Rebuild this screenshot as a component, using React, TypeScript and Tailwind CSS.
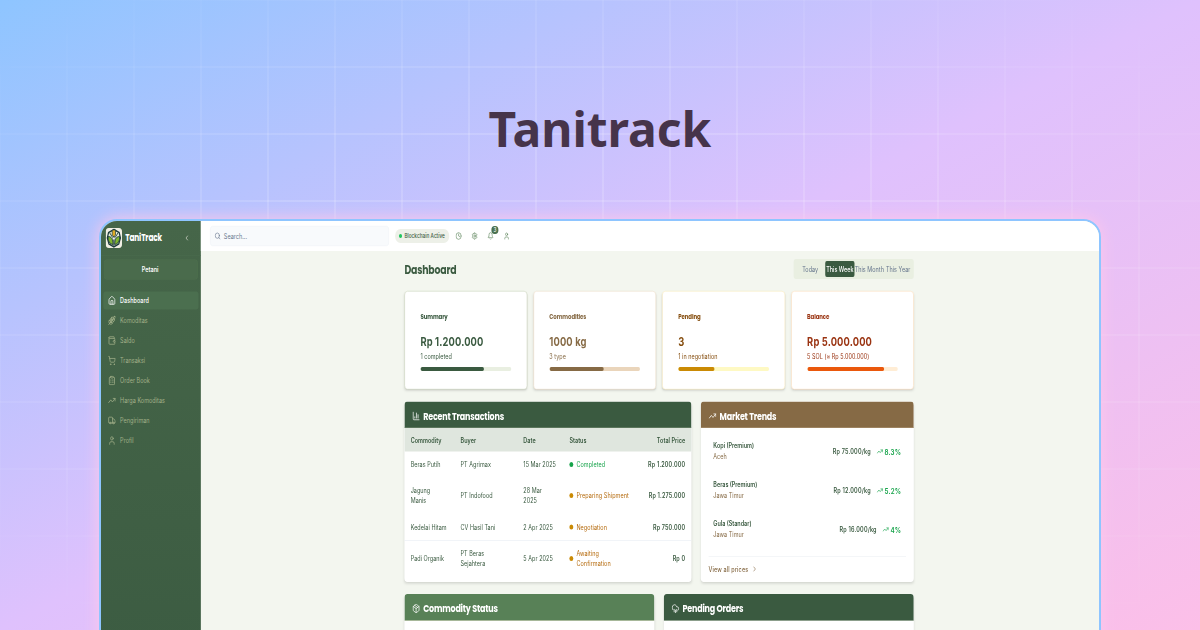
import React from "react";
import {
  House, Wallet, ShoppingCart, ClipboardList, TrendingUp, Truck, User, ChevronLeft, ChevronRight,
  Search, Settings, Bell, ChartColumn, Package, Clock, CloudRain, Wheat,
} from "lucide-react";

const nav = [
  { label: "Dashboard", icon: House, active: true },
  { label: "Komoditas", icon: Wheat },
  { label: "Saldo", icon: Wallet },
  { label: "Transaksi", icon: ShoppingCart },
  { label: "Order Book", icon: ClipboardList },
  { label: "Harga Komoditas", icon: TrendingUp },
  { label: "Pengiriman", icon: Truck },
  { label: "Profil", icon: User },
];

const stats = [
  { title: "Summary", value: "Rp 1.200.000", note: "1 completed", text: "text-[#3a5a40]", border: "border-[#bcc8aa]", track: "bg-[#e9efe1]", bar: "bg-[#3a5a40]", w: 70 },
  { title: "Commodities", value: "1000 kg", note: "3 type", text: "text-[#866a45]", border: "border-[#ead5bb]", track: "bg-[#ead5bb]", bar: "bg-[#866a45]", w: 60 },
  { title: "Pending", value: "3", note: "1 in negotiation", text: "text-[#854d0e]", border: "border-[#fbe7ab]", track: "bg-[#fef9c3]", bar: "bg-[#ca8a04]", w: 40 },
  { title: "Balance", value: "Rp 5.000.000", note: "5 SOL (≈ Rp 5.000.000)", text: "text-[#9a3412]", border: "border-[#fed7aa]", track: "bg-[#ffedd5]", bar: "bg-[#ea580c]", w: 85 },
];

const rows = [
  { c: "Beras Putih", b: "PT Agrimax", d: "15 Mar 2025", s: "Completed", p: "Rp 1.200.000", done: true, h: "h-[52px]" },
  { c: "Jagung Manis", b: "PT Indofood", d: "28 Mar 2025", s: "Preparing Shipment", p: "Rp 1.275.000", h: "h-[72px]" },
  { c: "Kedelai Hitam", b: "CV Hasil Tani", d: "2 Apr 2025", s: "Negotiation", p: "Rp 750.000", h: "h-[53px]" },
  { c: "Padi Organik", b: "PT Beras Sejahtera", d: "5 Apr 2025", s: "Awaiting Confirmation", p: "Rp 0", h: "h-[72px] border-t border-[#e2e8f0]" },
];

const trends = [
  { n: "Kopi (Premium)", r: "Aceh", p: "Rp 75.000/kg", v: "8.3%" },
  { n: "Beras (Premium)", r: "Jawa Timur", p: "Rp 12.000/kg", v: "5.2%" },
  { n: "Gula (Standar)", r: "Jawa Timur", p: "Rp 16.000/kg", v: "4%" },
];

const cols = "grid grid-cols-[128px_161px_118px_1fr_136px] items-center";
const head = "font-[Poppins,Inter,sans-serif]";

function Logo() {
  return (
    <svg viewBox="0 0 40 40" preserveAspectRatio="none" className="h-10 w-[42px] shrink-0 rounded-lg">
      <rect width="40" height="40" fill="#f1efe4" />
      <path d="M20 3L33 9L36 20L32 32L20 38L8 32L4 20L7 9Z" fill="#e8edda" stroke="#1d3b3c" strokeWidth="3" />
      <path d="M6 17c8 0 12 5 12 16C10 32 5 26 6 17Z" fill="#7fb52f" stroke="#1d3b3c" strokeWidth="2" />
      <path d="M34 17c-8 0-12 5-12 16 8-1 13-7 12-16Z" fill="#7fb52f" stroke="#1d3b3c" strokeWidth="2" />
      <path d="M20 16v22M10 10l7 9M30 10l-7 9" stroke="#1d3b3c" strokeWidth="2" fill="none" />
      <path d="M16 4h8v10l-4 4-4-4Z" fill="#e0ac25" stroke="#1d3b3c" strokeWidth="1.5" />
      <circle cx="20" cy="21" r="3" fill="#fff" stroke="#1d3b3c" />
    </svg>
  );
}

function PanelHead({ icon: Icon, title, color }: { icon: React.ElementType; title: string; color: string }) {
  return (
    <div className={`flex h-[53px] items-center gap-2 border-b px-5 pt-1.5 text-white ${color}`}>
      <Icon className="h-5 w-5" strokeWidth={2} />
      <span className={`${head} text-[20.5px] font-bold tracking-[-0.5px]`}>{title}</span>
    </div>
  );
}

export default function App() {
  return (
    <div className="relative h-[630px] w-[1200px] overflow-hidden bg-[linear-gradient(to_bottom_right,#8ec5ff_0%,#dfc1fd_50%,#fcbfe8_100%)]">
      <div className="absolute inset-0 bg-[linear-gradient(to_right,transparent_65px,#ffffff26_65px),linear-gradient(to_bottom,transparent_65px,#ffffff26_65px)] bg-[size:67px_67px] bg-[position:1px_1px] [mask-image:radial-gradient(ellipse_at_center,black_45%,transparent_95%)]" />
      <div className="relative flex h-full flex-col items-center">
        <h1 className="flex h-[219px] shrink-0 items-center pt-[38px] font-['Noto_Sans',sans-serif] text-[48px] font-bold text-[#46344a]">Tanitrack</h1>
        <div className="h-[430px] w-[1002px] shrink-0 overflow-hidden rounded-t-[18px] border-2 border-[#8ec5ff] bg-[#f3f6ef] shadow-[0_0_16px_#ffc8ea]">
          <div className="flex h-[860px] w-[2560px] origin-top-left scale-x-[0.39] scale-y-[0.5] bg-[#f3f6ef] font-[Inter,sans-serif] text-sm tracking-[0.1px] text-[#3a5a40]">
            <aside className="flex w-[256px] shrink-0 flex-col bg-[linear-gradient(#466649,#3c5c42)]">
              <div className="flex h-[69px] items-center border-b border-[#4b6d4e] pr-7 pl-3">
                <Logo />
                <span className={`${head} ml-2 flex-1 text-[19px] font-bold tracking-[-0.4px] text-white`}>TaniTrack</span>
                <ChevronLeft className="h-4 w-4 text-[#eceae2]" />
              </div>
              <div className="mx-2 mt-2 flex h-10 items-center justify-center rounded-md border border-[#52754f] bg-[#4a6b4c] pr-1 font-semibold text-white">Petani</div>
              <nav className="mt-6 flex flex-col gap-1 px-1.5">
                {nav.map(({ label, icon: Icon, active }) => (
                  <div key={label} className={`flex h-9 items-center gap-[11px] rounded-md px-3 ${active ? "bg-[#4b6f4f] font-medium text-white" : "text-[#a3b18a]"}`}>
                    <Icon className="h-5 w-5" strokeWidth={2} />
                    {label}
                  </div>
                ))}
              </nav>
            </aside>
            <main className="flex flex-1 flex-col">
              <header className="flex h-[60px] shrink-0 items-center bg-white pl-6">
                <div className="flex h-10 w-[458px] items-center gap-2 rounded-md border border-[#edf1f5] bg-[#f8fafc] px-2.5 text-[14px] text-[#64748b]">
                  <Search className="h-4 w-4" />
                  Search...
                </div>
                <div className="ml-4 flex h-7 w-[139px] items-center gap-1.5 rounded-full bg-[#edf0e8] px-2.5 text-xs font-medium whitespace-nowrap">
                  <span className="h-2 w-2 rounded-full bg-[#22c55e]" />
                  Blockchain Active
                </div>
                <div className="ml-4 flex items-center gap-[25px] text-[#588157]">
                  <Clock className="h-4 w-4" />
                  <Settings className="h-4 w-4" />
                  <div className="relative">
                    <Bell className="h-4 w-4" />
                    <span className="absolute -top-[12px] left-[10px] flex h-4 w-[18px] items-center justify-center rounded-full bg-[#4a7150] text-[12px] font-medium text-white">3</span>
                  </div>
                  <User className="h-4 w-4" />
                </div>
              </header>
              <div className="ml-[522px] flex w-[1306px] flex-col">
                <div className="mt-4 flex h-10 items-center justify-between">
                  <h2 className={`${head} pt-px text-2xl font-bold tracking-[-0.5px]`}>Dashboard</h2>
                  <div className="flex h-10 w-[308px] items-center rounded-md bg-[#e9efe1] p-1 text-[#64748b]">
                    <span className="w-[77px] text-center">Today</span>
                    <span className="flex h-8 w-[75px] items-center justify-center rounded-sm bg-[#3a5a40] font-medium tracking-normal whitespace-nowrap text-white">This Week</span>
                    <span className="w-[76px] text-center whitespace-nowrap">This Month</span>
                    <span className="w-[72px] text-center whitespace-nowrap">This Year</span>
                  </div>
                </div>
                <div className="mt-6 grid grid-cols-4 gap-4">
                  {stats.map((s) => (
                    <div key={s.title} className={`h-[197px] rounded-lg border bg-white px-10 pt-[37px] shadow-md ${s.border} ${s.text}`}>
                      <div className={`${head} text-sm leading-6 font-bold tracking-[-0.3px]`}>{s.title}</div>
                      <div className="mt-[23px] text-2xl leading-8 font-bold tracking-[0.35px]">{s.value}</div>
                      <div className="mt-[3px] text-sm leading-5">{s.note}</div>
                      <div className={`mt-3 h-2 overflow-hidden rounded-full ${s.track}`}>
                        <div className={`h-full rounded-full ${s.bar}`} style={{ width: `${s.w}%` }} />
                      </div>
                    </div>
                  ))}
                </div>
                <div className="mt-6 flex gap-6">
                  <section className="h-[361px] w-[736px] overflow-hidden rounded-lg bg-white shadow-md">
                    <PanelHead icon={ChartColumn} title="Recent Transactions" color="border-[#7d9279] bg-[#3a5a40]" />
                    <div className={`${cols} h-[47px] bg-[#dfe6de] px-4 font-semibold`}>
                      <span>Commodity</span><span>Buyer</span><span>Date</span><span>Status</span><span className="text-right">Total Price</span>
                    </div>
                    {rows.map((r) => (
                      <div key={r.c} className={`${cols} ${r.h} px-4 leading-5`}>
                        <span className={r.c.startsWith("Jagung") ? "w-16" : ""}>{r.c}</span>
                        <span className={r.b.includes("Beras") ? "w-24" : ""}>{r.b}</span>
                        <span className={r.d.startsWith("28") ? "w-14" : ""}>{r.d}</span>
                        <span className={`flex items-center gap-2 tracking-[0.2px] ${r.done ? "text-[#16a34a]" : "text-[#b56a0c]"}`}>
                          <span className={`h-2.5 w-2.5 shrink-0 rounded-full ${r.done ? "bg-[#16a34a]" : "bg-[#ca8a04]"}`} />
                          <span className={r.s.startsWith("Awaiting") ? "w-24" : ""}>{r.s}</span>
                        </span>
                        <span className="text-right font-semibold tracking-[0.4px] whitespace-nowrap">{r.p}</span>
                      </div>
                    ))}
                  </section>
                  <section className="h-[361px] w-[546px] overflow-hidden rounded-lg bg-white shadow-md">
                    <PanelHead icon={TrendingUp} title="Market Trends" color="border-[#b59d7c] bg-[#866a45]" />
                    <div className="flex flex-col px-8 pt-2">
                      {trends.map((t) => (
                        <div key={t.n} className="flex h-[78px] items-center">
                          <div className="flex-1 pb-[5px] leading-[21px]">
                            <div className="font-semibold tracking-normal">{t.n}</div>
                            <div className="text-[#866a45]">{t.r}</div>
                          </div>
                          <span className="mr-[15px] font-semibold tracking-[0.5px]">{t.p}</span>
                          <TrendingUp className="mr-1 h-4 w-4 text-[#16a34a]" />
                          <span className="text-base font-semibold tracking-[0.6px] text-[#16a34a]">{t.v}</span>
                        </div>
                      ))}
                    </div>
                    <div className="mx-5 mt-[14px] flex h-[50px] items-center gap-2 border-t border-[#e9edf0] font-medium tracking-[0.3px] text-[#866a45]">
                      View all prices <ChevronRight className="h-4 w-4" />
                    </div>
                  </section>
                </div>
                <div className="mt-6 grid grid-cols-2 gap-6">
                  <section className="h-[200px] overflow-hidden rounded-lg bg-white shadow-md">
                    <PanelHead icon={Package} title="Commodity Status" color="border-[#a3b18a] bg-[#588157]" />
                  </section>
                  <section className="h-[200px] overflow-hidden rounded-lg bg-white shadow-md">
                    <PanelHead icon={CloudRain} title="Pending Orders" color="border-[#7d9279] bg-[#3a5a40]" />
                  </section>
                </div>
              </div>
            </main>
          </div>
        </div>
      </div>
    </div>
  );
}
